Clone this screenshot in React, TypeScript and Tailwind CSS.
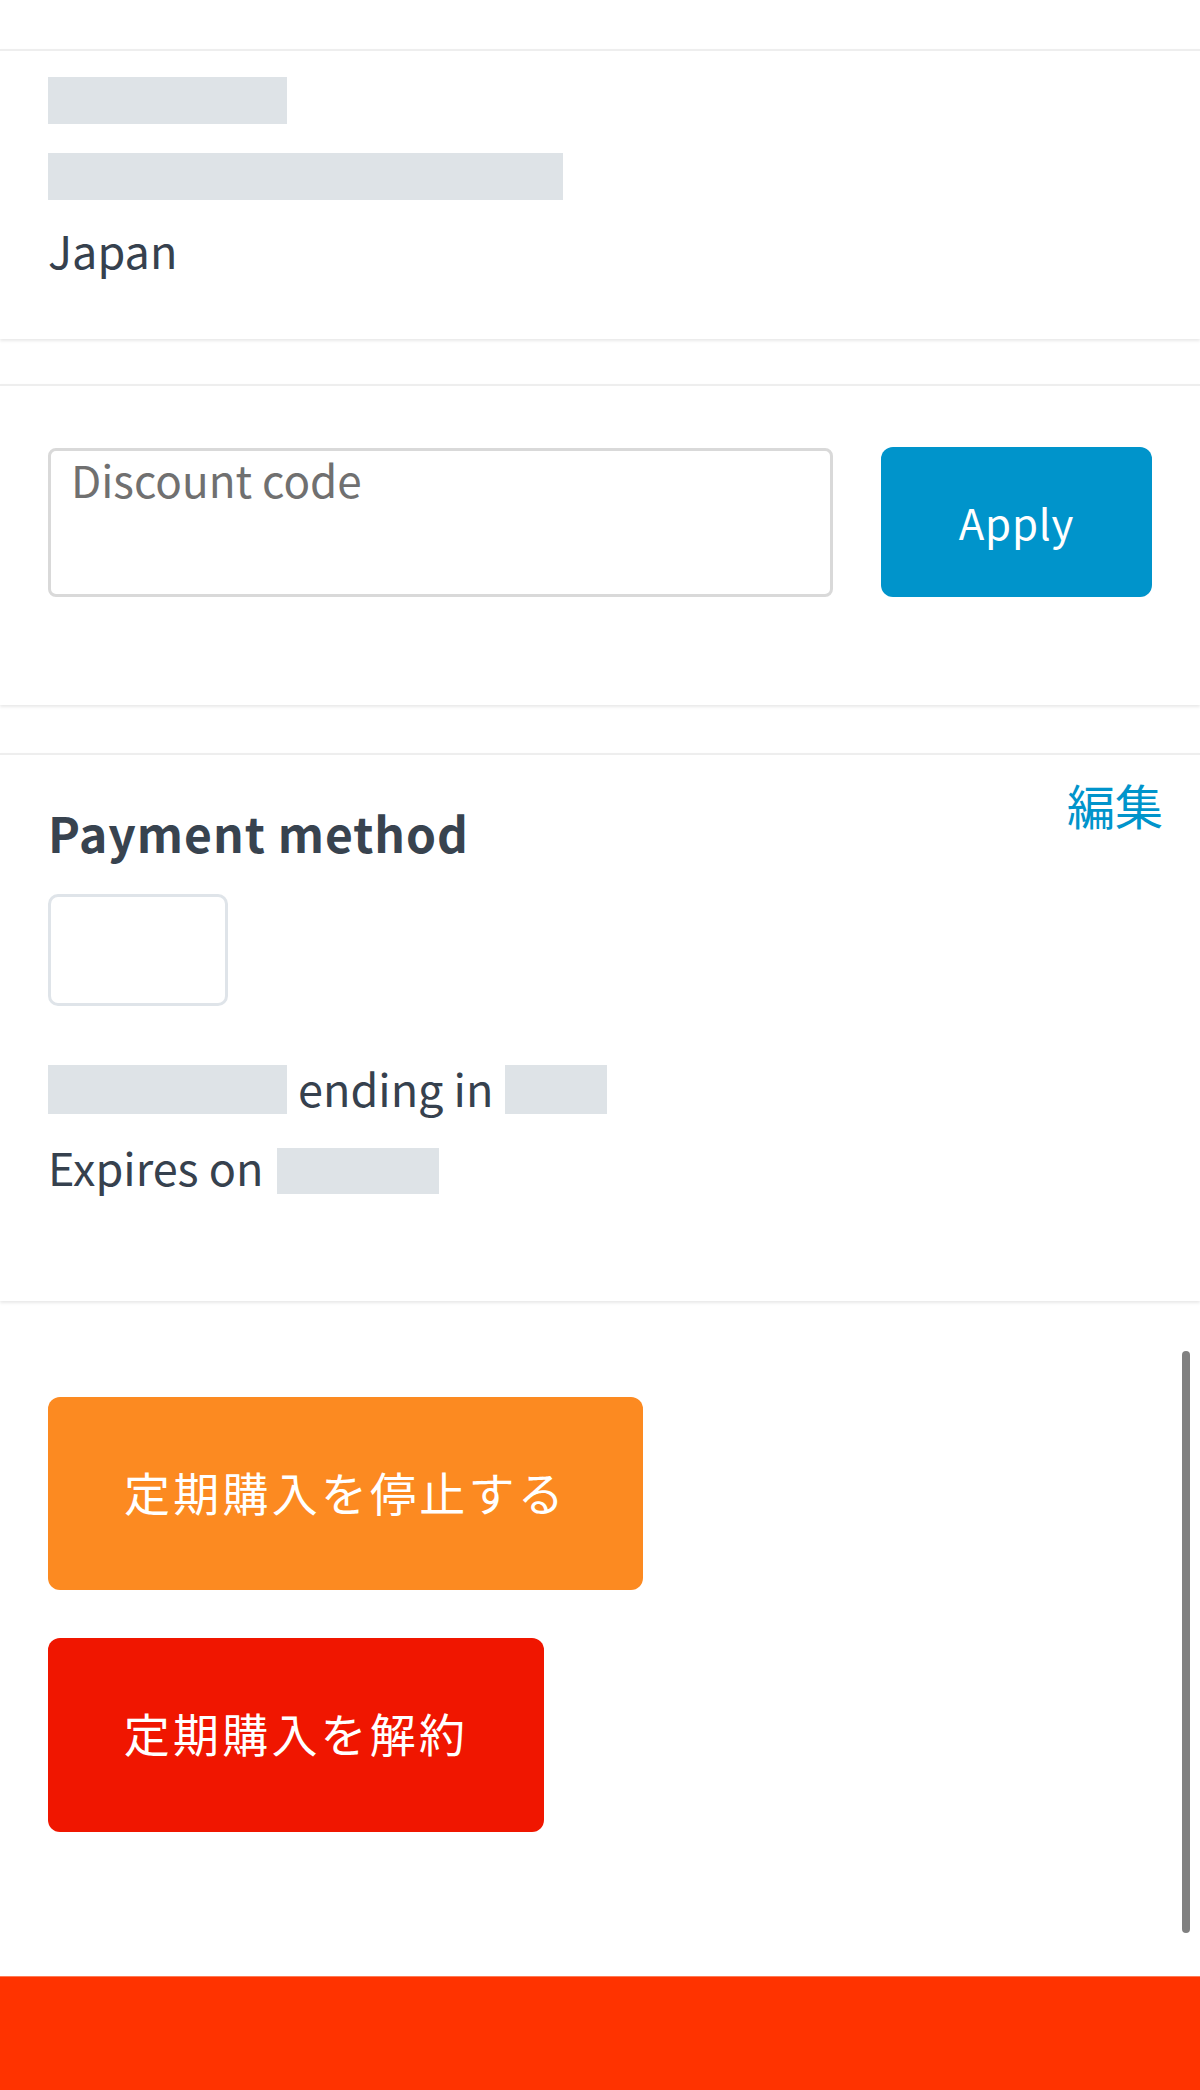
import React from 'react';

const Bar = ({ w, h }: { w: string; h: string }) => (
  <div className={`${w} ${h} bg-[#dee3e7] shrink-0`} />
);

const Card = ({ className, children }: { className?: string; children: React.ReactNode }) => (
  <section className={`bg-white border-t-2 border-[#eeeeee] shadow-[0_2px_3px_rgba(0,0,0,0.09)] px-12 ${className || ''}`}>
    {children}
  </section>
);

const App: React.FC = () => {
  return (
    <div className="relative min-h-screen bg-white pt-[49px] font-['Noto_Sans_CJK_JP','Noto_Sans',sans-serif] text-[#36414e]">
      {/* SHIPPING ADDRESS */}
      <Card className="pt-[26px] pb-[67px]">
        <Bar w="w-[239px]" h="h-[47px]" />
        <div className="mt-[29px]">
          <Bar w="w-[515px]" h="h-[47px]" />
        </div>
        <p className="mt-[27px] text-[45px] leading-none">Japan</p>
      </Card>

      {/* DISCOUNT */}
      <Card className="mt-[45px] pt-[61px] pb-[108px]">
        <div className="flex items-center gap-12">
          <textarea
            placeholder="Discount code"
            className="flex-1 h-[149px] resize-none border-[3px] border-[#d9d9d9] rounded-lg px-[20px] pt-[6px] text-[44px] leading-none text-[#36414e] placeholder:text-[#707070] outline-none"
          />
          <button className="w-[271px] h-[150px] rounded-xl bg-[#0094cb] text-white text-[42px] tracking-[0.02em] leading-none">
            Apply
          </button>
        </div>
      </Card>

      {/* PAYMENT METHOD */}
      <Card className="mt-[48px] pb-[107px]">
        <div className="flex items-start justify-between">
          <h2 className="mt-[53px] text-[48px] font-bold leading-none tracking-[0.02em] text-[#38434f]">Payment method</h2>
          <a className="mt-[25px] -mr-[11px] text-[48px] leading-none text-[#0094cb]">編集</a>
        </div>
        <div className="mt-[38px] w-[180px] h-[112px] border-[3px] border-[#dfe4e9] rounded-[10px]" />
        <div className="mt-[59px] flex items-start h-[49px]">
          <Bar w="w-[239px]" h="h-[49px]" />
          <span className="ml-[11px] text-[45px] leading-none">ending in</span>
          <div className="ml-[12px]">
            <Bar w="w-[102px]" h="h-[49px]" />
          </div>
        </div>
        <div className="mt-[34px] flex items-start h-[46px]">
          <span className="-mt-[4px] text-[45px] leading-none">Expires on</span>
          <div className="ml-[14px]">
            <Bar w="w-[162px]" h="h-[46px]" />
          </div>
        </div>
      </Card>

      {/* ACTIONS */}
      <div className="px-12 pt-[96px] pb-[144px] flex flex-col items-start gap-12">
        <button className="w-[595px] h-[193px] pb-[6px] rounded-xl bg-[#fc8a21] text-white text-[46px] tracking-[0.07em] leading-none">
          定期購入を停止する
        </button>
        <button className="w-[496px] h-[194px] pb-[7px] rounded-xl bg-[#f01600] text-white text-[46px] tracking-[0.07em] leading-none">
          定期購入を解約
        </button>
      </div>

      <footer className="h-[115px] bg-[#ff3300] border-t border-[#ff7a55]" />

      {/* scroll indicator */}
      <div className="absolute right-[10px] top-[1351px] w-[8px] h-[582px] rounded-full bg-[#808080]" />
    </div>
  );
};

export default App;
